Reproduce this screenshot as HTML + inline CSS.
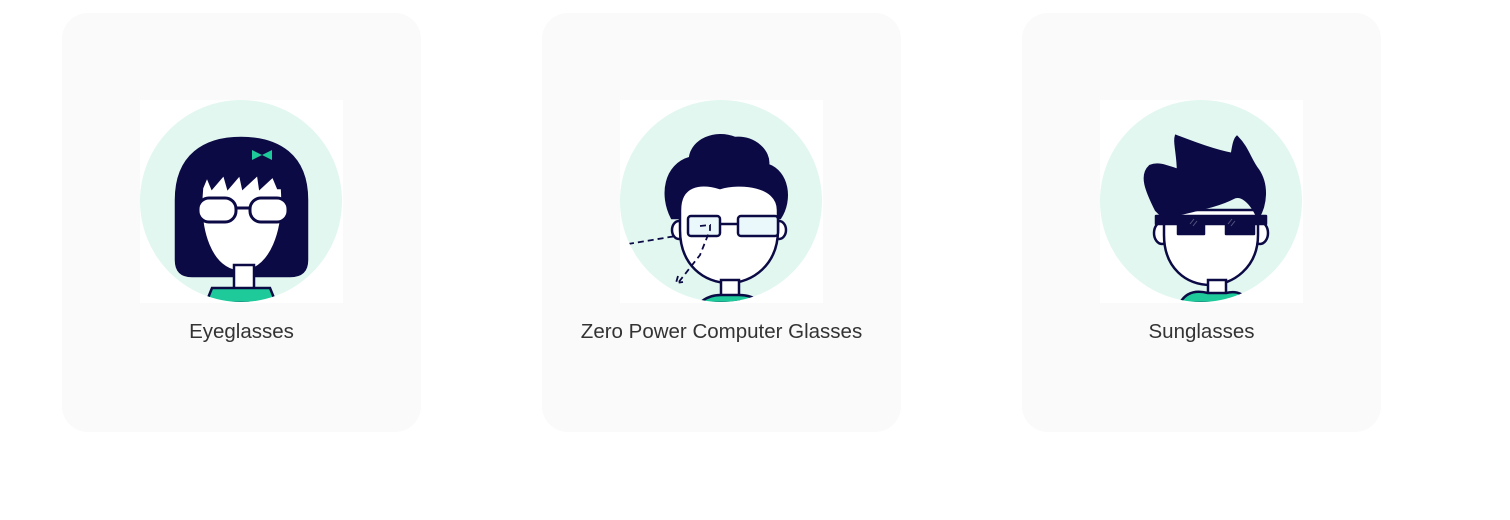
<!DOCTYPE html>
<html><head><style>
body{margin:0;width:1510px;height:520px;background:#fff;font-family:"Liberation Sans",sans-serif;position:relative;overflow:hidden}
.card{position:absolute;top:13px;width:359px;height:419px;background:#fafafa;border-radius:26px}
.img{position:absolute;left:78px;top:87px;width:203px;height:203px;background:#fff}
.lbl{position:absolute;top:307px;left:0;width:100%;text-align:center;font-size:20.5px;color:#333}
svg{display:block}
</style></head><body>
<div class="card" style="left:62px"><div class="img"><svg width="203" height="203" viewBox="0 0 203 203">
<defs><clipPath id="c1"><circle cx="101" cy="101" r="101"/></clipPath></defs>
<circle cx="101" cy="101" r="101" fill="#e2f7f0"/>
<g clip-path="url(#c1)" stroke="#0c0a45" stroke-width="2.5">
<path d="M36 160 L36 100 C36 55 65 38 101 38 C138 38 167 55 167 100 L167 160 C167 172 160 176 150 176 L52 176 C42 176 36 172 36 160 Z" fill="#0c0a45"/>
<path d="M62 88 L67 76 L72 88 L84 74 L88 88 L100 74 L103 88 L118 74 L120 88 L133 76 L138 88 L142 88 C145 130 132 170 101 172 C70 170 58 130 62 88 Z" fill="#fff"/>
<rect x="94" y="165" width="20" height="24" fill="#fff"/>
<path d="M66 203 L72 188 L130 188 L136 203 Z" fill="#1ec99a"/>
<rect x="58" y="98" width="38" height="24" rx="11" fill="#fff" stroke-width="3"/>
<rect x="110" y="98" width="38" height="24" rx="11" fill="#fff" stroke-width="3"/>
<path d="M96 108 L110 108" stroke-width="3"/>
</g>
<path d="M112 50 L122 55 L112 60 Z M132 50 L122 55 L132 60 Z" fill="#1ec99a"/>
</svg></div><div class="lbl">Eyeglasses</div></div>

<div class="card" style="left:542px"><div class="img"><svg width="203" height="203" viewBox="0 0 203 203">
<defs><clipPath id="c2"><circle cx="101" cy="101" r="101"/></clipPath></defs>
<circle cx="101" cy="101" r="101" fill="#e2f7f0"/>
<g clip-path="url(#c2)" stroke="#0c0a45" stroke-width="2.5">
<path d="M52 118 C40 95 45 65 70 58 C72 40 95 30 115 38 C135 36 150 52 148 65 C168 72 172 100 160 118 Z" fill="#0c0a45"/>
<ellipse cx="59" cy="130" rx="7" ry="9" fill="#fff"/>
<ellipse cx="159" cy="130" rx="7" ry="9" fill="#fff"/>
<path d="M60 110 C60 85 80 82 100 88 C120 82 158 85 158 110 L158 130 C158 165 132 183 109 183 C84 183 60 165 60 130 Z" fill="#fff"/>
<rect x="101" y="180" width="18" height="20" fill="#fff"/>
<path d="M80 203 C88 195 98 195 101 195 L119 195 C128 195 136 198 142 203 Z" fill="#1ec99a"/>
<rect x="68" y="116" width="32" height="20" rx="3" fill="#eaf8fb"/>
<rect x="118" y="116" width="40" height="20" rx="3" fill="#eaf8fb"/>
<path d="M100 124 L118 124"/>
<path d="M8 144 L56 136 M80 126 L90 125 L90 130 L80 155 L58 183 M58 176 L56 183 L63 182" fill="none" stroke-width="1.8" stroke-dasharray="6 4"/>
</g>
</svg></div><div class="lbl">Zero Power Computer Glasses</div></div>

<div class="card" style="left:1022px"><div class="img"><svg width="203" height="203" viewBox="0 0 203 203">
<defs><clipPath id="c3"><circle cx="101" cy="101" r="101"/></clipPath></defs>
<circle cx="101" cy="101" r="101" fill="#e2f7f0"/>
<g clip-path="url(#c3)" stroke="#0c0a45" stroke-width="2.5">
<ellipse cx="62" cy="133" rx="8" ry="11" fill="#fff"/>
<ellipse cx="160" cy="133" rx="8" ry="11" fill="#fff"/>
<path d="M64 110 L158 110 L158 135 C158 168 132 185 111 185 C86 185 64 168 64 135 Z" fill="#fff"/>
<path d="M56 110 C46 90 40 75 50 66 C60 62 70 68 78 70 C78 55 74 42 76 36 C92 42 112 50 132 54 C133 48 134 40 137 37 C148 48 150 60 158 70 C168 85 166 105 158 118 C150 100 140 94 133 98 C118 106 95 110 64 118 Z" fill="#0c0a45"/>
<rect x="108" y="180" width="18" height="16" fill="#fff"/>
<path d="M80 203 C86 192 96 190 108 193 L126 193 C138 190 146 195 146 203 Z" fill="#1ec99a"/>
<path d="M56 116 L166 116 L166 124 L154 124 L154 134 L126 134 L126 124 L104 124 L104 134 L78 134 L78 124 L56 124 Z" fill="#0c0a45" stroke-linejoin="round"/>
</g>
<path d="M90 124 L94 119 M93 126 L97 121 M128 124 L132 119 M131 126 L135 121" stroke="#55557a" stroke-width="1"/>
</svg></div><div class="lbl">Sunglasses</div></div>
</body></html>
